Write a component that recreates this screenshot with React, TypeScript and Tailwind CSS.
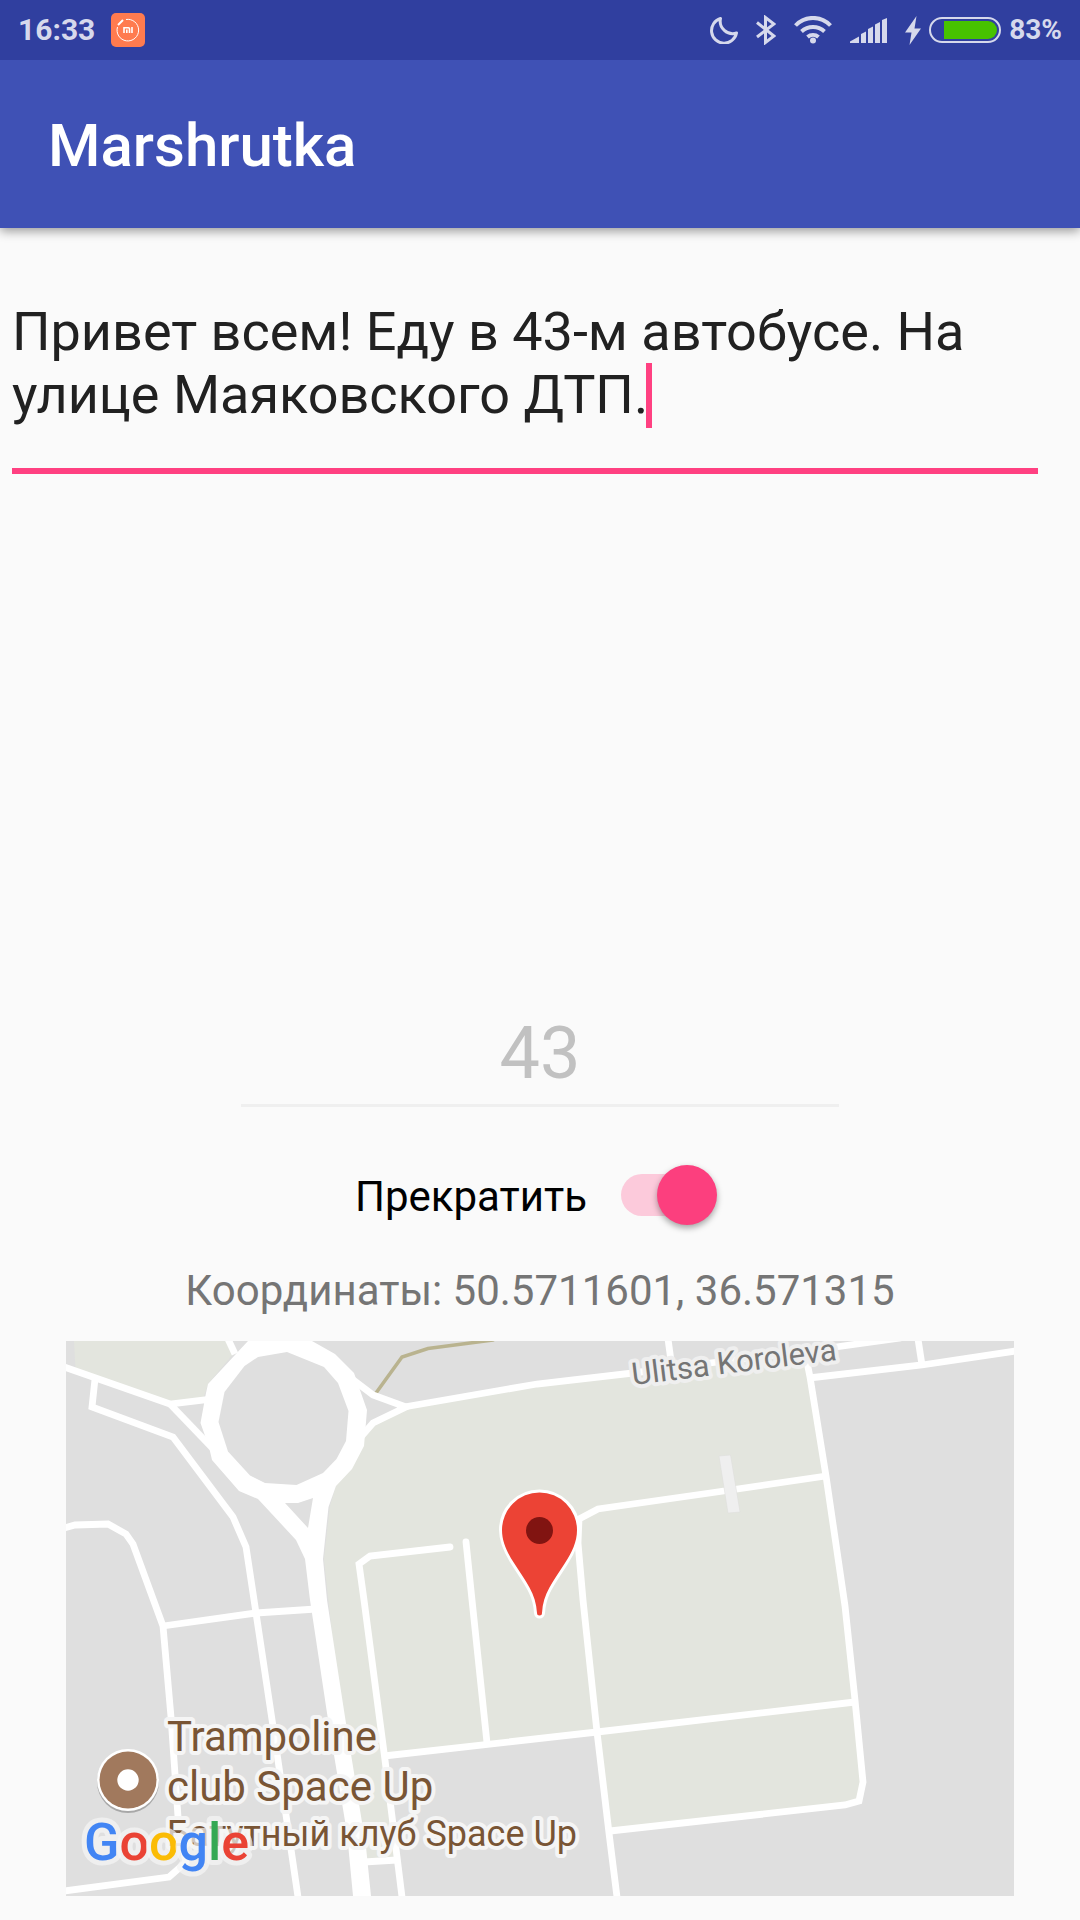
import { useState } from 'react';

const BatteryIcon = () => (
  <svg className="h-[26px] w-[72px] shrink-0" viewBox="0 0 72 26" fill="none">
    <rect x="1" y="1" width="70" height="24" rx="12" stroke="currentColor" strokeWidth="2" />
    <path d="M15 4h44a9 9 0 0 1 0 18H15z" fill="#47c200" />
  </svg>
);

const StatusBar = () => (
  <div className="flex h-[60px] items-center justify-between bg-[#303f9f] px-[18px] text-[#d6d9ec]">
    <div className="flex items-center gap-4">
      <span className="text-[30px] leading-none font-bold">16:33</span>
      <svg className="size-[34px] shrink-0" viewBox="0 0 34 34" fill="none">
        <rect width="34" height="34" rx="5" fill="#ff7b4f" />
        <path d="M15 6.500A10.800 10.800 0 1 1 6.500 14" stroke="#fff" strokeWidth="1" />
        <path d="M7 12l5-5" stroke="#fff" strokeWidth="2" />
        <path d="M13 20v-5.200h4.500a1 1 0 0 1 1 1V20M15.800 16.500V20M21 14v6" stroke="#fff" strokeWidth="1.600" />
      </svg>
    </div>
    <div className="flex items-center gap-[18px]">
      <svg className="size-7 shrink-0" viewBox="0 0 28 28" fill="none">
        <path
          d="M10.500 2.500A12.600 12.600 0 1 0 26.500 17A12.500 12.500 0 0 1 10.500 2.500z"
          stroke="currentColor"
          strokeWidth="3"
          strokeLinejoin="round"
        />
      </svg>
      <svg className="h-[30px] w-5 shrink-0" viewBox="0 0 20 30" fill="none">
        <path d="M1 7.500L18 21L9.500 27.500V2.500L18 9L1 22" stroke="currentColor" strokeWidth="3" />
      </svg>
      <svg className="h-7 w-[38px] shrink-0" viewBox="0 0 38 28" fill="none">
        <path
          d="M1.500 9.500A24 24 0 0 1 36.500 9.500M7.500 15.500A17 17 0 0 1 30.500 15.500M13.500 21A8.500 8.500 0 0 1 24.500 21"
          stroke="currentColor"
          strokeWidth="4"
        />
        <circle cx="19" cy="24.500" r="3" fill="currentColor" />
      </svg>
      <svg className="h-[25px] w-[37px] shrink-0" viewBox="0 0 37 25" fill="currentColor">
        <path d="M0 25v-1.500L9 18.500V25zM11 25V16l5-2.500V25zM18 25V11l5-2.500V25zM25 25V6.500l5-2.500V25zM32 25V2l5-2v25z" />
      </svg>
      <div className="flex items-center gap-2">
        <svg className="h-[29px] w-4 shrink-0" viewBox="0 0 16 29" fill="currentColor">
          <path d="M11.500 0L0 16.500h6.500L4.500 29L16 12.500H9.500z" />
        </svg>
        <BatteryIcon />
        <span className="text-[28px] leading-none font-bold">83%</span>
      </div>
    </div>
  </div>
);

const CityMap = () => (
  <svg className="block w-full" viewBox="0 0 948 555" role="img" aria-label="Map">
    <rect width="948" height="555" fill="#dfdfdf" />

    {/* parks */}
    <g fill="#e3e5de">
      <path d="M8 0L9.500 28L104 62L137 58L142 43L168 12L160 0z" />
      <path d="M299 89L340 66L471 43L567 32L644 22L740 12L760 135L781 289L797 441L793 460L779 464L544 490L531 391L321 415L329 519L301 521L270 330L258 218L264 165L270 145z" />
    </g>

    <path d="M310 52L336 16L362 7.500L427 -1" fill="none" stroke="#b9b38f" strokeWidth="3.500" strokeLinecap="round" />

    {/* streets */}
    <g fill="none" stroke="#fff" strokeWidth="6.800">
      <path d="M-2 26L104 63L145 58" />
      <path d="M104 63L152 113" />
      <path d="M29 38L26 66L107 96L167 176L180 206L190 272L208 392L232 556" />
      <path d="M-2 187L9 184L42 183L60 193L67 203L97 285L105 376L113 490L120 521L103 536L-2 550" />
      <path d="M97 285L190 272L250 268" />
      <path d="M162 -2L169 13" />
      <path d="M286 38L307 54L340 66L307 82L294 97" />
      <path d="M338 66L471 43L567 32L644 22L741 10L835 -3" />
      <path d="M602 -2L606 27" />
      <path d="M743 37L856 24L950 10" />
      <path d="M852 -2L856 24" />
      <path d="M740 16L744 36L760 135L779 265L789 359L797 441L793 460L779 464L544 490" />
      <path d="M760 135L644 152L532 168L513 178L512 202L517 259L531 391L543 492L551 556" />
      <path d="M789 361L531 391L318 415" />
      <path d="M384 206L304 215L293 223L298 259L319 419L336 556" strokeLinecap="round" />
      <path d="M400 201L406 259L421 402" strokeLinecap="round" />
      <path d="M298 521L331 519" />
    </g>

    {/* main road and roundabout */}
    <path
      d="M192 158L230 199L239 218L244 259L261 372L281 492L287 555H305L300 506L279 376L261 259L257 218L262.500 166L270 145z"
      fill="#fff"
    />
    <path
      d="M182 0L142 43L140 52L134.500 82L143 106L146 119L173 150L192 158L219 162L232 162L247 157L270 145L286 128L298 105L301 69L288 32L269 13L246 0z"
      fill="#fff"
    />
    <path
      d="M221 11L258 26L272 42L282.500 70L280 100L270.500 118L257 132L230.500 144L199 142L184 134.500L162 110.500L152.500 81L158.500 51L178.500 25L192 16z"
      fill="#dfdfdf"
    />
    <path d="M219 162L232 162L247 157L242 187z" fill="#dfdfdf" />
    <path d="M653 115L664.500 114L674 171L662 172z" fill="#efefef" stroke="#dcdcda" strokeWidth="0.500" />

    {/* labels */}
    <g className="font-[Roboto,sans-serif]" stroke="#f5f5f5" strokeWidth="8" strokeLinejoin="round">
      <text transform="translate(567 44) rotate(-7)" fontSize="31" fill="#757575" stroke="#efefef" style={{ paintOrder: 'stroke' }}>
        Ulitsa Koroleva
      </text>
      <g fill="#795535">
        <text x="101" y="410" fontSize="42" style={{ paintOrder: 'stroke' }}>
          Trampoline
        </text>
        <text x="101" y="460" fontSize="42" style={{ paintOrder: 'stroke' }}>
          club Space Up
        </text>
        <text x="101" y="505" fontSize="36" style={{ paintOrder: 'stroke' }}>
          Батутный клуб Space Up
        </text>
      </g>
    </g>

    {/* place badge */}
    <circle cx="62" cy="441" r="31" fill="#a8a8a8" />
    <circle cx="62" cy="439" r="31" fill="#fff" />
    <circle cx="62" cy="439" r="28.500" fill="#a1795d" />
    <circle cx="62" cy="439" r="10.700" fill="#fff" />

    {/* marker */}
    <path
      d="M436 189a37.500 37.500 0 0 1 75 0c0 12-5 22-12 33C487 241 477 252 476 272a2.500 2.500 0 0 1-5 0C470 252 460 241 448 222C441 211 436 201 436 189z"
      fill="#ec4335"
      stroke="#fff"
      strokeWidth="6"
      style={{ paintOrder: 'stroke' }}
    />
    <circle cx="473.500" cy="189.500" r="13.500" fill="#811411" />

    <text
      className="font-[Roboto,sans-serif] font-medium"
      x="18"
      y="519"
      fontSize="52"
      stroke="#f5f5f5"
      strokeOpacity="0.700"
      strokeWidth="10"
      strokeLinejoin="round"
      style={{ paintOrder: 'stroke' }}
    >
      <tspan fill="#4285f4">G</tspan>
      <tspan fill="#ea4335">o</tspan>
      <tspan fill="#fbbc05">o</tspan>
      <tspan fill="#4285f4">g</tspan>
      <tspan fill="#34a853">l</tspan>
      <tspan fill="#ea4335">e</tspan>
    </text>
  </svg>
);

const App = () => {
  const [message, setMessage] = useState<string>(
    'Привет всем! Еду в 43-м автобусе. На улице Маяковского ДТП.'
  );
  const [isActive, setIsActive] = useState<boolean>(true);

  return (
    <div className="flex min-h-screen flex-col bg-[#fafafa] font-[Roboto,sans-serif]">
      <header className="relative shadow-[0_3px_10px_rgba(0,0,0,0.4)]">
        <StatusBar />
        <div className="flex h-[168px] items-center bg-[#3f51b5] px-12 pt-1">
          <h1 className="text-[60px] leading-[72px] font-medium text-white">Marshrutka</h1>
        </div>
      </header>

      <main className="flex flex-1 flex-col">
        <div className="flex-1 pt-[72px] pr-[42px] pl-3">
          <div className="relative">
            <textarea
              className="block h-[174px] w-full resize-none border-b-[6px] border-[#ff4081] text-[54px] leading-[63px] text-[#212121] caret-transparent outline-none"
              aria-label="Сообщение"
              value={message}
              onChange={(e) => setMessage(e.target.value)}
            />
            <span className="absolute top-[63px] left-[634px] h-[65px] w-[6px] bg-[#ff4081]" />
          </div>
        </div>

        <div className="flex flex-col items-center">
          <input
            className="w-[598px] border-b-[3px] border-[#efefef] pb-2 text-center text-[72px] leading-[84px] text-[#c1c1c1]"
            type="text"
            aria-label="Номер маршрута"
            value="43"
            disabled
            readOnly
          />

          <label className="mt-[58px] flex h-[60px] items-center gap-[34px] pr-2 text-[42px] leading-[50px] text-black">
            <span className="pt-1">Прекратить</span>
            <input
              type="checkbox"
              role="switch"
              checked={isActive}
              onChange={() => setIsActive(!isActive)}
              className="relative h-[60px] w-24 cursor-pointer appearance-none before:absolute before:top-[9px] before:left-0 before:h-[42px] before:w-[87px] before:rounded-full before:bg-[#c4c4c4] after:absolute after:top-0 after:left-0 after:size-[60px] after:rounded-full after:bg-[#f1f1f1] after:shadow-[0_3px_6px_rgba(0,0,0,0.35)] checked:before:bg-[#fccadb] checked:after:left-9 checked:after:bg-[#fc3f7e]"
            />
          </label>

          <p className="mt-[41px] text-[42px] leading-[50px] text-[#757575]">
            Координаты: 50.5711601, 36.571315
          </p>
        </div>

        <div className="mx-[66px] mt-[25px] mb-6">
          <CityMap />
        </div>
      </main>
    </div>
  );
};

export default App;
